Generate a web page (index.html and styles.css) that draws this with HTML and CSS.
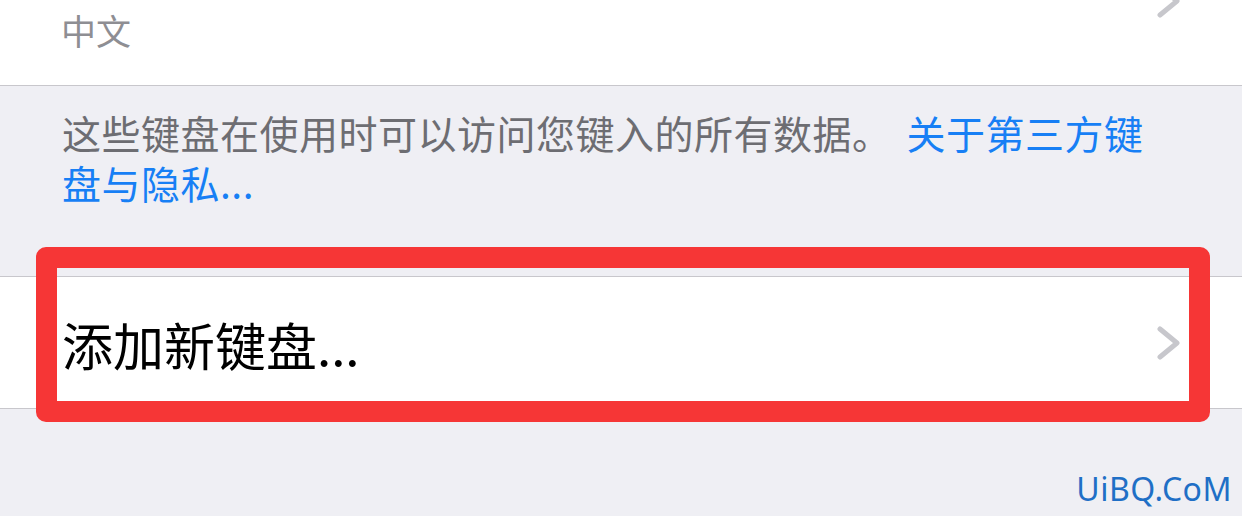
FILE: index.html
```html
<!doctype html>
<html lang="zh-CN">
  <head>
    <meta charset="UTF-8" />
    <meta name="viewport" content="width=device-width, initial-scale=1.0" />
    <title>键盘</title>
    <link rel="stylesheet" href="styles.css">
  </head>
  <body>
    <div class="group">
      <div class="cell cell-top">
        <span class="detail">中文</span>
        <svg class="chevron chevron-top" width="24" height="34" viewBox="0 0 24 34">
          <polyline points="3,3 20,17 3,31" />
        </svg>
      </div>
    </div>

    <p class="footer">
      这些键盘在使用时可以访问您键入的所有数据。<a class="link" href="#">关于第三方键盘与隐私...</a>
    </p>

    <div class="group">
      <div class="cell cell-main">
        <span class="title">添加新键盘...</span>
        <svg class="chevron" width="24" height="34" viewBox="0 0 24 34">
          <polyline points="3,3 20,17 3,31" />
        </svg>
      </div>
    </div>

    <div class="highlight"></div>
    <div class="watermark">UiBQ.CoM</div>
  </body>
</html>
```

FILE: styles.css
```css
html,
body {
  height: 100%;
}

body {
  margin: 0;
  background-color: #efeff4;
  font-family: "Noto Sans CJK SC", "Noto Sans", sans-serif;
  overflow: hidden;
  position: relative;
}

.group {
  background-color: #fff;
  border-bottom: 1px solid #c8c7cc;
}

.group + .footer + .group {
  border-top: 1px solid #c8c7cc;
}

.cell {
  display: flex;
  justify-content: space-between;
  padding: 0 62px;
}

.cell-top {
  height: 85px;
  align-items: flex-start;
}

.cell-main {
  height: 131px;
  align-items: center;
}

.detail {
  font-size: 35px;
  line-height: 1;
  color: #8e8e93;
  margin-top: 12px;
  margin-left: -1px;
}

.title {
  font-size: 51px;
  line-height: 1;
  color: #000;
  margin-top: 4px;
}

.chevron {
  flex: none;
  margin-right: -1px;
}

.chevron polyline {
  fill: none;
  stroke: #c7c7cc;
  stroke-width: 5;
  stroke-linecap: round;
  stroke-linejoin: round;
}

.chevron-top {
  margin-top: -16px;
}

.footer {
  margin: 0;
  padding: 21px 80px 69px 62px;
  font-size: 39px;
  line-height: 50px;
  letter-spacing: 0.5px;
  color: #6d6d72;
}

.link {
  color: #177ff5;
  text-decoration: none;
  margin-left: 15px;
}

.highlight {
  position: absolute;
  left: 36px;
  top: 247px;
  width: 1132px;
  height: 133px;
  border: 21px solid #f63636;
  border-radius: 10px;
}

.watermark {
  position: absolute;
  right: 10px;
  bottom: 6px;
  font-family: "Noto Sans", sans-serif;
  font-size: 32px;
  letter-spacing: 0.5px;
  color: #1f6fc6;
}
```
